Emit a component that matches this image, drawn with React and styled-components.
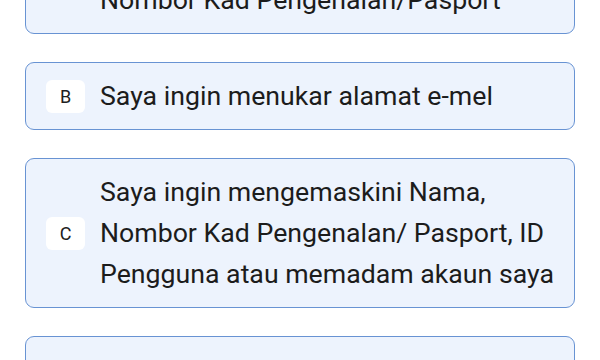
import React from 'react';
import styled, { createGlobalStyle } from 'styled-components';

const options = [
  {
    key: 'A',
    lines: ['Saya terlupa ID Pengguna/ Kata Laluan/', 'Nombor Kad Pengenalan/Pasport'],
  },
  { key: 'B', lines: ['Saya ingin menukar alamat e-mel'] },
  {
    key: 'C',
    lines: [
      'Saya ingin mengemaskini Nama,',
      'Nombor Kad Pengenalan/ Pasport, ID',
      'Pengguna atau memadam akaun saya',
    ],
  },
  { key: 'D', lines: ['Saya tidak menerima kod TAC/OTP', 'melalui SMS'] },
];

const App = () => {
  return (
    <>
      <GlobalStyle />
      <List>
        {options.map(option => (
          <Option key={option.key}>
            <Badge>{option.key}</Badge>
            <Label>
              {option.lines.map(line => (
                <span key={line}>{line}</span>
              ))}
            </Label>
          </Option>
        ))}
      </List>
    </>
  );
};

export default App;

const GlobalStyle = createGlobalStyle`
  html, body {
    margin: 0;
    background: #ffffff;
    overflow: hidden;
  }
  body {
    font-family: Roboto, "Noto Sans", sans-serif;
    color: #1c1c1c;
  }
`;

const List = styled.div`
  display: flex;
  flex-direction: column;
  gap: 28px;
  padding: 0 25px;
  margin-top: -75px;
`;

const Option = styled.div`
  display: flex;
  align-items: center;
  padding: 12.5px 20px;
  background: #edf3fd;
  border: 1px solid #6893d3;
  border-radius: 9px;
`;

const Badge = styled.div`
  flex-shrink: 0;
  width: 39px;
  height: 33px;
  display: flex;
  align-items: center;
  justify-content: center;
  background: #ffffff;
  border-radius: 6px;
  font-size: 18px;
  color: #202020;
  margin-right: 15px;
`;

const Label = styled.div`
  display: flex;
  flex-direction: column;
  font-size: 26.7px;
  line-height: 41px;
  white-space: nowrap;
`;
